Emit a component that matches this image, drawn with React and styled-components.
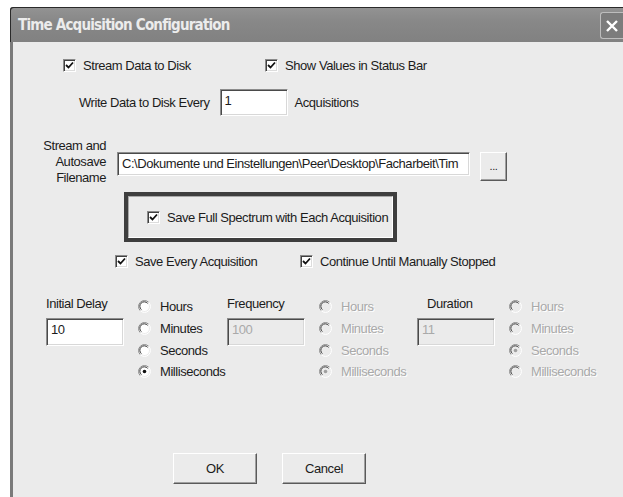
import React from "react";
import styled, { createGlobalStyle } from "styled-components";

const GlobalStyle = createGlobalStyle`
  html, body {
    margin: 0;
    padding: 0;
    background: #ffffff;
    overflow: hidden;
  }
  body {
    font-family: "Liberation Sans", Arial, sans-serif;
    font-size: 13px;
    letter-spacing: -0.45px;
    color: #1c1c1c;
  }
`;

const Window = styled.div`
  margin: 7px 0 0 10px;
  width: 613px;
  height: 490px;
  display: flex;
  flex-direction: column;
`;

const TitleBar = styled.div`
  height: 35px;
  flex-shrink: 0;
  display: flex;
  align-items: center;
  justify-content: space-between;
  padding-left: 8px;
  background: linear-gradient(#939393, #888888 40%, #818181);
  border-top-left-radius: 3px;
  box-shadow: inset 1px 1px 0 #2a2a2a;
`;

const Title = styled.div`
  font-family: "DejaVu Sans Condensed", "Liberation Sans", sans-serif;
  font-weight: bold;
  font-size: 15px;
  letter-spacing: -0.8px;
  color: #ececec;
`;

const CloseButton = styled.div`
  width: 22px;
  height: 25px;
  margin-top: 2px;
  border: 1px solid #bdbdbd;
  border-right: none;
  border-radius: 3px 0 0 3px;
  background: #7c7c7c;
  display: flex;
  align-items: center;
  justify-content: center;
`;

const Body = styled.div`
  flex: 1;
  background: #ebebeb;
  border-left: 3px solid #7a7a7a;
  display: flex;
  flex-direction: column;
`;

const Row = styled.div`
  display: flex;
  align-items: center;
  padding-left: ${(p) => p.$indent || 0}px;
  margin-top: ${(p) => p.$top || 0}px;
  height: ${(p) => p.$height || 16}px;
`;

const Label = styled.span`
  white-space: nowrap;
  color: ${(p) => (p.$disabled ? "#a9a9a9" : "#1c1c1c")};
  ${(p) => (p.$disabled ? "text-shadow: 1px 1px 0 #ffffff;" : "")}
`;

const Check = styled.label`
  display: flex;
  align-items: center;
  gap: 7px;
  width: ${(p) => (p.$width ? `${p.$width}px` : "auto")};
`;

const Box = styled.span`
  width: 11px;
  height: 11px;
  flex-shrink: 0;
  background: #ffffff;
  border-top: 1px solid #8a8a8a;
  border-left: 1px solid #8a8a8a;
  border-bottom: 1px solid #ffffff;
  border-right: 1px solid #ffffff;
  box-shadow: inset 1px 1px 0 #404040, inset -1px -1px 0 #dcdcdc;
  display: flex;
  align-items: center;
  justify-content: center;
`;

const TextBox = styled.div`
  width: ${(p) => p.$width}px;
  height: ${(p) => p.$height || 27}px;
  box-sizing: border-box;
  background: ${(p) => (p.$disabled ? "#ebebeb" : "#ffffff")};
  border-top: 1px solid #8c8c8c;
  border-left: 1px solid #8c8c8c;
  border-bottom: 1px solid #ffffff;
  border-right: 1px solid #ffffff;
  box-shadow: inset 1px 1px 0 #4a4a4a, inset -1px -1px 0 #d8d8d8;
  padding: 3px 0 0 4px;
  color: ${(p) => (p.$disabled ? "#a9a9a9" : "#1c1c1c")};
  white-space: nowrap;
  overflow: hidden;
  flex-shrink: 0;
`;

const Button = styled.div`
  width: ${(p) => p.$width}px;
  height: ${(p) => p.$height}px;
  box-sizing: border-box;
  background: #ebebeb;
  border-top: 1px solid #ffffff;
  border-left: 1px solid #ffffff;
  border-bottom: 1px solid #5a5a5a;
  border-right: 1px solid #5a5a5a;
  box-shadow: inset -1px -1px 0 #a0a0a0;
  display: flex;
  align-items: center;
  justify-content: center;
  font-size: ${(p) => p.$size || 13}px;
  color: #1c1c1c;
  flex-shrink: 0;
`;

const FileLabel = styled.div`
  width: 93px;
  text-align: right;
  line-height: 16px;
  flex-shrink: 0;
`;

const Highlight = styled.div`
  margin: 6px 0 0 111px;
  width: 273px;
  height: 50px;
  box-sizing: border-box;
  border: 4px solid #3e3e3e;
  display: flex;
`;

const HighlightInner = styled.div`
  flex: 1;
  min-width: 0;
  border-top: 1px solid #a8a8a8;
  border-left: 1px solid #a8a8a8;
  border-bottom: 1px solid #ffffff;
  border-right: 1px solid #ffffff;
  display: flex;
  align-items: center;
  padding-left: 18px;
`;

const Timing = styled.div`
  display: flex;
  margin-top: 27px;
  padding-left: 33px;
`;

const Group = styled.div`
  display: flex;
  width: ${(p) => p.$width}px;
  flex-shrink: 0;
`;

const Field = styled.div`
  display: flex;
  flex-direction: column;
  gap: 6px;
  margin-right: 14px;
`;

const FieldLabel = styled.div`
  height: 16px;
  padding-left: ${(p) => p.$offset || 0}px;
`;

const Radios = styled.div`
  display: flex;
  flex-direction: column;
`;

const RadioRow = styled.div`
  display: flex;
  align-items: center;
  gap: 9px;
  height: 21.7px;
`;

const Footer = styled.div`
  display: flex;
  gap: 25px;
  padding-left: 160px;
  margin-top: auto;
  margin-bottom: 13px;
`;

const Tick = () => (
  <svg width="9" height="9" viewBox="0 0 9 9">
    <path d="M1 4 L3.5 6.5 L8 1.5" stroke="#111" strokeWidth="1.8" fill="none" />
  </svg>
);

const CheckBox = ({ children, width }) => (
  <Check $width={width}>
    <Box>
      <Tick />
    </Box>
    <Label>{children}</Label>
  </Check>
);

const RadioDot = ({ checked, disabled }) => (
  <svg width="13" height="13" viewBox="0 0 13 13">
    <path d="M10.7 2.3 A5.6 5.6 0 1 0 2.3 10.7" stroke="#8a8a8a" fill="none" />
    <path d="M10.7 2.3 A5.6 5.6 0 0 1 2.3 10.7" stroke="#ffffff" fill="none" />
    <circle cx="6.5" cy="6.5" r="4.5" fill={disabled ? "#ebebeb" : "#ffffff"} />
    <path d="M9.6 3.4 A4.4 4.4 0 1 0 3.4 9.6" stroke="#404040" fill="none" />
    {checked && <circle cx="6.5" cy="6.5" r="1.8" fill={disabled ? "#a0a0a0" : "#111"} />}
  </svg>
);

const units = ["Hours", "Minutes", "Seconds", "Milliseconds"];

const RadioGroup = ({ selected, disabled }) => (
  <Radios>
    {units.map((u) => (
      <RadioRow key={u}>
        <RadioDot checked={u === selected} disabled={disabled} />
        <Label $disabled={disabled}>{u}</Label>
      </RadioRow>
    ))}
  </Radios>
);

const timings = [
  { label: "Initial Delay", value: "10", unit: "Milliseconds", width: 181 },
  { label: "Frequency", value: "100", unit: "Milliseconds", width: 190, disabled: true },
  { label: "Duration", value: "11", unit: "Seconds", offset: 10, disabled: true, width: 200 },
];

export default function App() {
  return (
    <>
      <GlobalStyle />
      <Window>
        <TitleBar>
          <Title>Time Acquisition Configuration</Title>
          <CloseButton>
            <svg width="14" height="14" viewBox="0 0 14 14">
              <path d="M2 2 L12 12 M12 2 L2 12" stroke="#ffffff" strokeWidth="2.4" />
            </svg>
          </CloseButton>
        </TitleBar>
        <Body>
          <Row $indent={50} $top={15}>
            <CheckBox width={202}>Stream Data to Disk</CheckBox>
            <CheckBox>Show Values in Status Bar</CheckBox>
          </Row>
          <Row $indent={66} $top={16} $height={27}>
            <Label>Write Data to Disk Every</Label>
            <TextBox $width={68} style={{ marginLeft: 10, marginRight: 7 }}>
              1
            </TextBox>
            <Label>Acquisitions</Label>
          </Row>
          <Row $top={22} $height={48}>
            <FileLabel>
              Stream and
              <br />
              Autosave
              <br />
              Filename
            </FileLabel>
            <TextBox $width={353} $height={24} style={{ marginLeft: 11, marginTop: 3 }}>
              C:\Dokumente und Einstellungen\Peer\Desktop\Facharbeit\Tim
            </TextBox>
            <Button $width={27} $height={29} $size={11} style={{ marginLeft: 10, marginTop: 8 }}>
              ...
            </Button>
          </Row>
          <Highlight>
            <HighlightInner>
              <CheckBox>Save Full Spectrum with Each Acquisition</CheckBox>
            </HighlightInner>
          </Highlight>
          <Row $indent={102} $top={11}>
            <CheckBox width={185}>Save Every Acquisition</CheckBox>
            <CheckBox>Continue Until Manually Stopped</CheckBox>
          </Row>
          <Timing>
            {timings.map((t) => (
              <Group key={t.label} $width={t.width}>
                <Field>
                  <FieldLabel $offset={t.offset}>{t.label}</FieldLabel>
                  <TextBox $width={78} $height={28} $disabled={t.disabled}>
                    {t.value}
                  </TextBox>
                </Field>
                <RadioGroup selected={t.unit} disabled={t.disabled} />
              </Group>
            ))}
          </Timing>
          <Footer>
            <Button $width={84} $height={31}>OK</Button>
            <Button $width={84} $height={31}>Cancel</Button>
          </Footer>
        </Body>
      </Window>
    </>
  );
}
